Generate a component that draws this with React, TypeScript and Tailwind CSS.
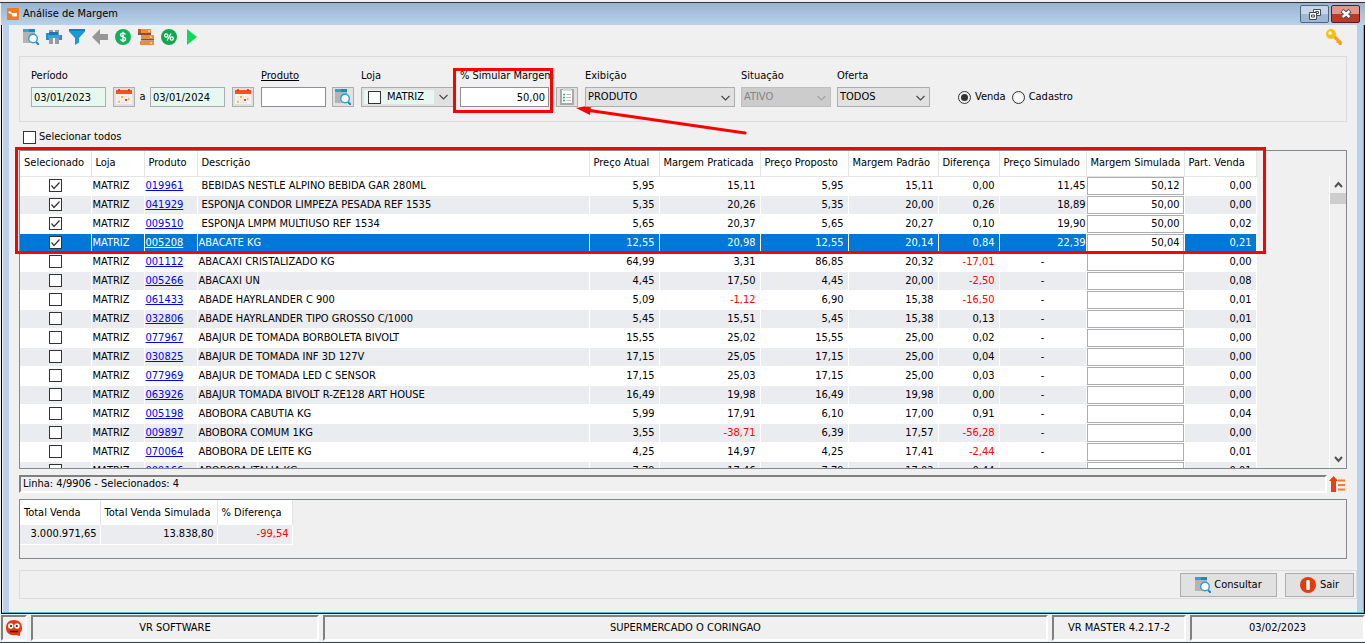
import React from "react";

const COLUMNS = [
  { label: "Selecionado", width: "w-[71px]" },
  { label: "Loja", width: "w-[53px]" },
  { label: "Produto", width: "w-[53px]" },
  { label: "Descrição", width: "w-[392px]" },
  { label: "Preço Atual", width: "w-[70px]" },
  { label: "Margem Praticada", width: "w-[101px]" },
  { label: "Preço Proposto", width: "w-[88px]" },
  { label: "Margem Padrão", width: "w-[90px]" },
  { label: "Diferença", width: "w-[61px]" },
  { label: "Preço Simulado", width: "w-[87px]" },
  { label: "Margem Simulada", width: "w-[98px]" },
  { label: "Part. Venda", width: "w-[72px]" },
];

type Item = {
  code: string;
  name: string;
  // atual, praticada, proposto, padrão, diferença
  values: string[];
  simPrice?: string;
  simMargin?: string;
  share: string;
};

const ITEMS: Item[] = [
  { code: "019961", name: "BEBIDAS NESTLE ALPINO BEBIDA GAR 280ML", values: ["5,95", "15,11", "5,95", "15,11", "0,00"], simPrice: "11,45", simMargin: "50,12", share: "0,00" },
  { code: "041929", name: "ESPONJA CONDOR LIMPEZA PESADA REF 1535", values: ["5,35", "20,26", "5,35", "20,00", "0,26"], simPrice: "18,89", simMargin: "50,00", share: "0,00" },
  { code: "009510", name: "ESPONJA LMPM MULTIUSO REF 1534", values: ["5,65", "20,37", "5,65", "20,27", "0,10"], simPrice: "19,90", simMargin: "50,00", share: "0,02" },
  { code: "005208", name: "ABACATE KG", values: ["12,55", "20,98", "12,55", "20,14", "0,84"], simPrice: "22,39", simMargin: "50,04", share: "0,21" },
  { code: "001112", name: "ABACAXI CRISTALIZADO KG", values: ["64,99", "3,31", "86,85", "20,32", "-17,01"], share: "0,00" },
  { code: "005266", name: "ABACAXI UN", values: ["4,45", "17,50", "4,45", "20,00", "-2,50"], share: "0,08" },
  { code: "061433", name: "ABADE HAYRLANDER C 900", values: ["5,09", "-1,12", "6,90", "15,38", "-16,50"], share: "0,01" },
  { code: "032806", name: "ABADE HAYRLANDER TIPO GROSSO C/1000", values: ["5,45", "15,51", "5,45", "15,38", "0,13"], share: "0,01" },
  { code: "077967", name: "ABAJUR DE TOMADA BORBOLETA BIVOLT", values: ["15,55", "25,02", "15,55", "25,00", "0,02"], share: "0,00" },
  { code: "030825", name: "ABAJUR DE TOMADA INF 3D 127V", values: ["17,15", "25,05", "17,15", "25,00", "0,04"], share: "0,00" },
  { code: "077969", name: "ABAJUR DE TOMADA LED C SENSOR", values: ["17,15", "25,03", "17,15", "25,00", "0,03"], share: "0,00" },
  { code: "063926", name: "ABAJUR TOMADA BIVOLT R-ZE128 ART HOUSE", values: ["16,49", "19,98", "16,49", "19,98", "0,00"], share: "0,00" },
  { code: "005198", name: "ABOBORA CABUTIA KG", values: ["5,99", "17,91", "6,10", "17,00", "0,91"], share: "0,04" },
  { code: "009897", name: "ABOBORA COMUM 1KG", values: ["3,55", "-38,71", "6,39", "17,57", "-56,28"], share: "0,00" },
  { code: "070064", name: "ABOBORA DE LEITE KG", values: ["4,25", "14,97", "4,25", "17,41", "-2,44"], share: "0,01" },
  { code: "009166", name: "ABOBORA ITALIA KG", values: ["7,79", "17,46", "7,79", "17,02", "0,44"], share: "0,01" },
];

const SELECTED_ROW = 3;

export default function App() {
  return (
    <div className="flex h-screen flex-col overflow-hidden bg-[#f0f0f0] font-['DejaVu_Sans_Condensed','DejaVu_Sans',sans-serif] text-[11px] leading-[14px] text-black">
      <div className="mt-[2px] flex min-h-0 flex-1 flex-col border-t border-[#333] pl-px">
        <TitleBar />
        <div className="flex min-h-0 flex-1 flex-col border-x border-b border-black">
          <div className="flex min-h-0 flex-1 flex-col border-b border-[#35c5e0] border-r pl-px">
            <div className="flex min-h-0 flex-1 flex-col border-x-[6px] border-[#b9d1ea] bg-[#f0f0f0]">
              <Toolbar />
              <Filters />
              <label className="mt-[7px] ml-[14px] flex h-[16px] items-center gap-[3px]">
                <CheckBox />
                Selecionar todos
              </label>
              <ItemsPanel />
              <div className="mt-[6px] mr-[12px] ml-[10px] flex items-center gap-[2px]">
                <div className="h-[18px] flex-1 border-2 border-t-[#808080] border-l-[#808080] border-r-white border-b-white pl-[2px]">
                  Linha: 4/9906 - Selecionados: 4
                </div>
                <button aria-label="Ir para o topo">
                  <TopIcon />
                </button>
              </div>
              <Totals />
              <div className="mt-[11px] mb-[13px] ml-[10px] flex h-[29px] items-center justify-end gap-[8px] border border-[#dcdcdc] pr-[2px]">
                <button className="flex h-[24px] w-[97px] items-center justify-center gap-[3px] border border-[#adadad] bg-[#e1e1e1]">
                  <SearchIcon />
                  Consultar
                </button>
                <button className="flex h-[24px] w-[69px] items-center justify-center gap-[4px] border border-[#adadad] bg-[#e1e1e1]">
                  <ExitIcon />
                  Sair
                </button>
              </div>
            </div>
          </div>
        </div>
      </div>
      <StatusBar />
    </div>
  );
}

function TitleBar() {
  return (
    <div className="flex h-[22px] shrink-0 items-center bg-linear-to-b from-[#98b4d2] to-[#b9d1ea] pr-[5px] pl-[6px]">
      <svg width="12" height="12" viewBox="0 0 12 12">
        <rect width="12" height="12" rx="1" fill="#f47a20" />
        <path d="M1.500 3.500h2L5 5h5v2.500L9.500 8.500H5.500L4.500 6 1.500 5z" fill="#fff" />
      </svg>
      <h1 className="ml-[4px] flex-1">Análise de Margem</h1>
      <div className="flex gap-[2px]">
        <button
          aria-label="Restaurar"
          className="flex h-[18px] w-[29px] items-center justify-center rounded-[2px] border border-[#53657d] bg-linear-to-b from-[#c5d6ea] from-50% to-[#9db7d4] to-50%"
        >
          <svg width="12" height="11" viewBox="0 0 12 11" fill="none">
            <path d="M4.500.5h7v6h-7z" fill="#fff" stroke="#444b5c" />
            <path d="M6.500 2.500h3v2h-3z" stroke="#444b5c" />
            <path d="M.5 3.500h7v7h-7z" fill="#fff" stroke="#444b5c" />
            <path d="M2.500 6h3v2h-3z" stroke="#444b5c" />
          </svg>
        </button>
        <button
          aria-label="Fechar"
          className="flex h-[18px] w-[29px] items-center justify-center rounded-[2px] border border-[#5a1a1f] bg-linear-to-b from-[#e0968c] from-50% to-[#bd3a26] to-50%"
        >
          <svg width="12" height="10" viewBox="0 0 12 10">
            <path d="M2 1.500l8 7M10 1.500l-8 7" stroke="#4a4d5e" strokeWidth="4.400" />
            <path d="M2.500 2l7 6M9.500 2l-7 6" stroke="#fff" strokeWidth="2.400" />
          </svg>
        </button>
      </div>
    </div>
  );
}

function Toolbar() {
  return (
    <div className="mt-[3px] mr-[14px] ml-[14px] flex h-[18px] shrink-0 items-center gap-[7px]">
      <button aria-label="Consultar">
        <SearchIcon />
      </button>
      <button aria-label="Imprimir">
        <svg width="16" height="16" viewBox="0 0 16 16">
          <path d="M3 1h4v14H3zM9 1h4v14H9z" fill="#959b9f" />
          <path d="M0 4h3v7H0zM13 6h3v5h-3z" fill="#1c95cf" />
          <path d="M2 6h12v3H2z" fill="#29a9e0" />
          <path d="M3 3h9v3H3z" fill="#157ab0" />
        </svg>
      </button>
      <button aria-label="Filtrar">
        <svg width="16" height="16" viewBox="0 0 16 16">
          <path d="M0 0h16v2.500L10 9v4.500L6 16V9L0 2.500z" fill="#199ad8" />
          <path d="M0 0h16v2H0z" fill="#0f7fc0" />
        </svg>
      </button>
      <button aria-label="Voltar">
        <svg width="16" height="16" viewBox="0 0 16 16">
          <path d="M0 8l8-8v5h8v6H8v5z" fill="#979797" />
        </svg>
      </button>
      <button aria-label="Preço">
        <svg width="16" height="16" viewBox="0 0 16 16">
          <circle cx="8" cy="8" r="8" fill="#10b15a" />
          <path d="M10.500 5.500C10 4.500 9 4.200 8 4.200c-1.500 0-2.500.7-2.500 1.800 0 2.600 5 1.200 5 3.900 0 1.200-1.100 1.900-2.500 1.900-1.200 0-2.200-.5-2.600-1.500M8 2.800v10.400" fill="none" stroke="#fff" strokeWidth="1.400" />
        </svg>
      </button>
      <button aria-label="Estoque">
        <svg width="16" height="16" viewBox="0 0 16 16">
          <path d="M0 0h13v4H0zM3 6h13v4H3zM2 12h14v4H2z" fill="#f08a3c" />
          <path d="M0 4h13v2H0zM3 10h13v1.500H3z" fill="#7b5142" />
          <path d="M0 0h3v4H0z" fill="#bb5a25" />
          <path d="M10 2h2M12 8h2M12 14h2" stroke="#fff" />
        </svg>
      </button>
      <button aria-label="Percentual">
        <svg width="16" height="16" viewBox="0 0 16 16">
          <circle cx="8" cy="8" r="8" fill="#10a850" />
          <g fill="none" stroke="#fff" strokeWidth="1.300">
            <circle cx="5.200" cy="6.500" r="1.600" />
            <circle cx="10.800" cy="9.500" r="1.600" />
            <path d="M10 4.500l-4 7" />
          </g>
        </svg>
      </button>
      <button aria-label="Executar">
        <svg width="16" height="16" viewBox="0 0 16 16">
          <path d="M3 0l10 8-10 8z" fill="#0ddb58" />
        </svg>
      </button>
      <button aria-label="Permissões" className="ml-auto">
        <svg width="18" height="16" viewBox="0 0 18 16">
          <path d="M7 8l2.500-2.500L17 13l-.5 3H14l-1-2h-1.500v-2z" fill="#f9a01b" />
          <circle cx="6" cy="5" r="5" fill="#fdbf0f" />
          <circle cx="5" cy="4" r="1.700" fill="#fff" />
        </svg>
      </button>
    </div>
  );
}

function Filters() {
  return (
    <section className="mt-[10px] mr-[10px] ml-[10px] flex h-[66px] shrink-0 items-start border border-[#dcdcdc] pt-[12px] pl-[11px]">
      <Field label="Período" id="inicio">
        <div className="flex items-center">
          <input id="inicio" defaultValue="03/01/2023" className="h-[20px] w-[75px] border border-[#abadb3] bg-[#e6f8f0] px-[2px]" />
          <IconButton label="Calendário inicial" className="ml-[7px]">
            <CalendarIcon />
          </IconButton>
          <label htmlFor="fim" className="w-[15px] text-center">a</label>
          <input id="fim" defaultValue="03/01/2024" className="h-[20px] w-[75px] border border-[#abadb3] bg-[#e6f8f0] px-[2px]" />
          <IconButton label="Calendário final" className="ml-[7px]">
            <CalendarIcon />
          </IconButton>
        </div>
      </Field>
      <Field label="Produto" id="produto" className="ml-[7px]" underline>
        <div className="flex items-center gap-[6px]">
          <input id="produto" className="h-[20px] w-[65px] border border-[#8e8f94] bg-white px-[3px]" />
          <IconButton label="Buscar produto">
            <SearchIcon />
          </IconButton>
        </div>
      </Field>
      <Field label="Loja" id="loja" className="ml-[7px]">
        <div className="flex h-[20px] w-[93px] items-center border border-[#adadad] bg-[#e1e1e1] pl-[2px]">
          <div className="flex h-[14px] w-[70px] items-center gap-[6px] bg-[#e6f8f0] pl-[4px]">
            <CheckBox label="Marcar loja" />
            <select id="loja" className="w-[46px] appearance-none">
              <option>MATRIZ</option>
            </select>
          </div>
          <Chevron className="ml-[5px] text-[#444]" />
        </div>
      </Field>
      <div className="relative ml-[6px] w-[89px]">
        <Field label="% Simular Margem" id="margem">
          <input id="margem" defaultValue="50,00" className="h-[20px] w-full border border-[#8e8f94] bg-white px-[3px] text-right" />
        </Field>
        <div className="pointer-events-none absolute -top-[1px] -right-[4px] -bottom-[6px] -left-[7px] border-[3px] border-[#fe0000]" />
      </div>
      <div className="relative ml-[7px] pt-[18px]">
        <IconButton label="Aplicar margem">
          <ListIcon />
        </IconButton>
        <svg width="172" height="30" viewBox="0 0 172 30" className="pointer-events-none absolute top-[36px] left-[20px]">
          <path d="M10 5L169 28" stroke="#fe0000" strokeWidth="3" strokeLinecap="round" />
          <path d="M0 3L15 0l-1 10z" fill="#fe0000" />
        </svg>
      </div>
      <Field label="Exibição" id="exibicao" className="ml-[7px]">
        <SelectBox id="exibicao" value="PRODUTO" width="w-[150px]" />
      </Field>
      <Field label="Situação" id="situacao" className="ml-[6px]">
        <SelectBox id="situacao" value="ATIVO" width="w-[90px]" disabled />
      </Field>
      <Field label="Oferta" id="oferta" className="ml-[6px]">
        <SelectBox id="oferta" value="TODOS" width="w-[93px]" />
      </Field>
      <div className="ml-[28px] flex gap-[6px] pt-[21px]">
        <Radio label="Venda" checked />
        <Radio label="Cadastro" />
      </div>
    </section>
  );
}

type FieldProps = {
  label: string;
  id: string;
  className?: string;
  underline?: boolean;
  children: React.ReactNode;
};

function Field({ label, id, className = "", underline, children }: FieldProps) {
  return (
    <div className={`flex flex-col gap-[4px] ${className}`}>
      <label htmlFor={id} className={`h-[14px] whitespace-nowrap ${underline ? "underline" : ""}`}>
        {label}
      </label>
      {children}
    </div>
  );
}

type IconButtonProps = { label: string; className?: string; children: React.ReactNode };

function IconButton({ label, className = "", children }: IconButtonProps) {
  return (
    <button
      aria-label={label}
      className={`flex h-[20px] w-[22px] items-center justify-center border border-[#adadad] bg-[#e1e1e1] ${className}`}
    >
      {children}
    </button>
  );
}

type SelectBoxProps = { id: string; value: string; width: string; disabled?: boolean };

function SelectBox({ id, value, width, disabled }: SelectBoxProps) {
  return (
    <div className={`relative ${width}`}>
      <select
        id={id}
        disabled={disabled}
        className="block h-[20px] w-full appearance-none border border-[#adadad] bg-[#e1e1e1] px-[2px] disabled:border-[#bfbfbf] disabled:bg-[#cccccc] disabled:text-[#838383] disabled:opacity-100"
      >
        <option>{value}</option>
      </select>
      <Chevron className={`pointer-events-none absolute top-[8px] right-[5px] ${disabled ? "text-[#a5a5a5]" : "text-[#444]"}`} />
    </div>
  );
}

function Chevron({ className = "" }: { className?: string }) {
  return (
    <svg width="9" height="6" viewBox="0 0 9 6" className={`shrink-0 ${className}`}>
      <path d="M.5 1l4 4 4-4" fill="none" stroke="currentColor" strokeWidth="1.100" />
    </svg>
  );
}

function Radio({ label, checked }: { label: string; checked?: boolean }) {
  return (
    <label className="flex h-[14px] items-center gap-[4px]">
      <input
        type="radio"
        name="base"
        defaultChecked={checked}
        className="size-[13px] appearance-none rounded-full border border-[#333] bg-white bg-clip-content p-[2px] outline-none checked:bg-[#333]"
      />
      {label}
    </label>
  );
}

function CheckBox({ checked, label }: { checked?: boolean; label?: string }) {
  return (
    <span className="inline-grid size-[13px] shrink-0 align-top">
      <input
        type="checkbox"
        aria-label={label}
        defaultChecked={checked}
        className="peer col-start-1 row-start-1 size-[13px] appearance-none border border-[#333] bg-white"
      />
      <svg viewBox="0 0 13 13" className="pointer-events-none invisible col-start-1 row-start-1 size-[13px] peer-checked:visible">
        <path d="M2.500 6.500l2.500 3 5.500-6" fill="none" stroke="#333" strokeWidth="1.200" />
      </svg>
    </span>
  );
}

function ItemsPanel() {
  return (
    <div className="relative mt-[5px] mr-[10px] ml-[10px] min-h-0 flex-1">
      <div className="flex h-full overflow-hidden border border-[#828790]">
        <div className="min-w-0 flex-1 overflow-hidden">
          <table className="w-[1236px] table-fixed border-collapse">
            <thead>
              <tr className="h-[25px] bg-white">
                {COLUMNS.map((c) => (
                  <th
                    key={c.label}
                    className={`${c.width} border-r border-b border-[#e5e5e5] pr-0 pl-[4px] text-left font-normal whitespace-nowrap`}
                  >
                    {c.label}
                  </th>
                ))}
              </tr>
            </thead>
            <tbody>
              {ITEMS.map((item, i) => (
                <ItemRow key={item.code} item={item} index={i} />
              ))}
            </tbody>
          </table>
        </div>
        <ScrollBar />
      </div>
      {/*Highlight over the simulated rows*/}
      <div className="pointer-events-none absolute -top-[3px] -left-[4px] h-[107px] w-[1251px] border-[3px] border-[#fe0000]" />
    </div>
  );
}

function ItemRow({ item, index }: { item: Item; index: number }) {
  const selected = index === SELECTED_ROW;
  const simulated = item.simMargin !== undefined;
  const tone = selected ? "bg-[#0078d7] text-white" : index % 2 ? "bg-[#eaecf0]" : "bg-white";
  const cell = "border-r border-b border-white p-0";

  return (
    <tr className={`h-[19px] ${tone}`}>
      <td className={`${cell} text-center`}>
        <CheckBox checked={simulated} label={`Selecionar ${item.code}`} />
      </td>
      <td className={cell}>
        <span className="pl-px">MATRIZ</span>
      </td>
      <td className={`${cell} pl-px`}>
        <a href="#" className={`underline ${selected ? "text-white" : "text-[#0000ff]"}`}>
          {item.code}
        </a>
      </td>
      <td className={`${cell} whitespace-nowrap ${simulated && !selected ? "pl-[4px]" : "pl-px"}`}>{item.name}</td>
      {item.values.map((v, i) => (
        <td key={i} className={`${cell} pr-[4px] text-right ${v.startsWith("-") ? "text-[#ff0000]" : ""}`}>
          {v}
        </td>
      ))}
      {item.simPrice ? (
        <td className={`${cell} text-right`}>{item.simPrice}</td>
      ) : (
        <td className={`${cell} text-center`}>-</td>
      )}
      <td className={cell}>
        <input
          aria-label={`Margem simulada ${item.code}`}
          defaultValue={item.simMargin}
          className="block h-[18px] w-full border border-[#abadb3] bg-white px-[3px] text-right text-black"
        />
      </td>
      <td className={`${cell} pr-[4px] text-right`}>{item.share}</td>
    </tr>
  );
}

function ScrollBar() {
  return (
    <div className="mt-[25px] flex w-[17px] shrink-0 flex-col items-center border-l border-white text-[#505050]">
      <svg width="9" height="17" viewBox="0 0 9 17">
        <path d="M1 11l3.500-4L8 11" fill="none" stroke="currentColor" strokeWidth="2" />
      </svg>
      <div className="h-[11px] w-full bg-[#cdcdcd]" />
      <svg width="9" height="17" viewBox="0 0 9 17" className="mt-auto">
        <path d="M1 6l3.500 4L8 6" fill="none" stroke="currentColor" strokeWidth="2" />
      </svg>
    </div>
  );
}

function Totals() {
  return (
    <div className="mt-[6px] mr-[10px] ml-[10px] h-[60px] shrink-0 border border-[#828790]">
      <table className="w-[272px] table-fixed border-collapse">
        <thead>
          <tr className="h-[25px] bg-white text-left">
            <th className="w-[80px] border-r border-[#e5e5e5] px-[4px] font-normal whitespace-nowrap">Total Venda</th>
            <th className="w-[117px] border-r border-[#e5e5e5] px-[4px] font-normal whitespace-nowrap">Total Venda Simulada</th>
            <th className="w-[75px] border-r border-[#e5e5e5] px-[4px] font-normal whitespace-nowrap">% Diferença</th>
          </tr>
        </thead>
        <tbody>
          <tr className="h-[19px] bg-[#eaecf0] text-right">
            <td className="border-r border-b border-white pr-[3px]">3.000.971,65</td>
            <td className="border-r border-b border-white pr-[3px]">13.838,80</td>
            <td className="border-r border-b border-white pr-[3px] text-[#ff0000]">-99,54</td>
          </tr>
        </tbody>
      </table>
    </div>
  );
}

function StatusBar() {
  const box =
    "flex items-center justify-center border-2 border-t-[#808080] border-l-[#808080] border-r-white border-b-white";
  return (
    <footer className="flex h-[29px] shrink-0 gap-[4px] border-b border-[#2c4a52] pt-px pb-px pl-px">
      <div className={`${box} w-[26px]`}>
        <svg width="16" height="16" viewBox="0 0 16 16">
          <path d="M8 0c5 0 8 3 8 8 0 2-.5 3.500-2 5v3l-4-1c-6 1-10-2-10-7 0-5 3-8 8-8z" fill="#e8390d" />
          <circle cx="4.800" cy="6" r="2.700" fill="#fff" />
          <circle cx="11" cy="6" r="2.700" fill="#fff" />
          <circle cx="5" cy="6" r="1.100" fill="#222" />
          <circle cx="10.800" cy="6" r="1.100" fill="#222" />
          <path d="M4 11.500h8" stroke="#3a1208" strokeWidth="1.500" />
        </svg>
      </div>
      <div className={`${box} w-[288px]`}>VR SOFTWARE</div>
      <div className={`${box} flex-1`}>SUPERMERCADO O CORINGAO</div>
      <div className={`${box} w-[134px]`}>VR MASTER 4.2.17-2</div>
      <div className={`${box} w-[175px]`}>03/02/2023</div>
    </footer>
  );
}

function SearchIcon() {
  return (
    <svg width="16" height="16" viewBox="0 0 16 16">
      <path d="M0 0h12v14H0z" fill="#b4b4b4" />
      <path d="M0 0h12v3H0z" fill="#14b0dd" />
      <path d="M6 0h6v3H6z" fill="#0f8ccb" />
      <path d="M13 13l3 3" stroke="#1b86c8" strokeWidth="2" />
      <circle cx="10" cy="9.500" r="4.300" fill="#fff" stroke="#2a9fda" strokeWidth="1.400" />
    </svg>
  );
}

function CalendarIcon() {
  return (
    <svg width="16" height="16" viewBox="0 0 16 16">
      <path d="M0 4h16v11H0z" fill="#f4f2f0" />
      <path d="M0 1h16v4H0z" fill="#f4511e" />
      <path d="M3 0v2M13 0v2" stroke="#c43a10" strokeWidth="1.500" />
      <path d="M2.500 8h11M2.500 11h11M2.500 13.500h9" stroke="#d9d6d3" strokeDasharray="1.500 1" />
      <path d="M5 7h2v2H5zM2 12h2v1.500H2zM12 9h1.500v2H12z" fill="#f5b731" />
      <path d="M9 10h2v2H9z" fill="#e5451c" />
    </svg>
  );
}

function ListIcon() {
  return (
    <svg width="16" height="18" viewBox="0 0 16 18">
      <path d="M1 1h14v16H1z" fill="#a9a9a9" />
      <path d="M3 2h10v13H3z" fill="#fff" />
      <path d="M4 0h8v3H4z" fill="#d5d5d5" />
      <path d="M7.500 6.500H12M7.500 9.500H12M7.500 12.500H12" stroke="#b8b8b8" />
      <path d="M4 6.500h2M4 9.500h2M4 12.500h2" stroke="#1fb866" strokeWidth="1.500" />
    </svg>
  );
}

function TopIcon() {
  return (
    <svg width="16" height="16" viewBox="0 0 16 16">
      <path d="M4.500 0L9 5H7v11H2V5H0z" fill="#e84010" />
      <path d="M9 4.500h7M9 9h7M9 13.500h7" stroke="#f47b2a" strokeWidth="2" />
    </svg>
  );
}

function ExitIcon() {
  return (
    <svg width="16" height="16" viewBox="0 0 16 16">
      <circle cx="8" cy="8" r="8" fill="#e23c0c" />
      <rect x="6.300" y="3" width="3.400" height="10" rx="1" fill="#fff" />
    </svg>
  );
}
